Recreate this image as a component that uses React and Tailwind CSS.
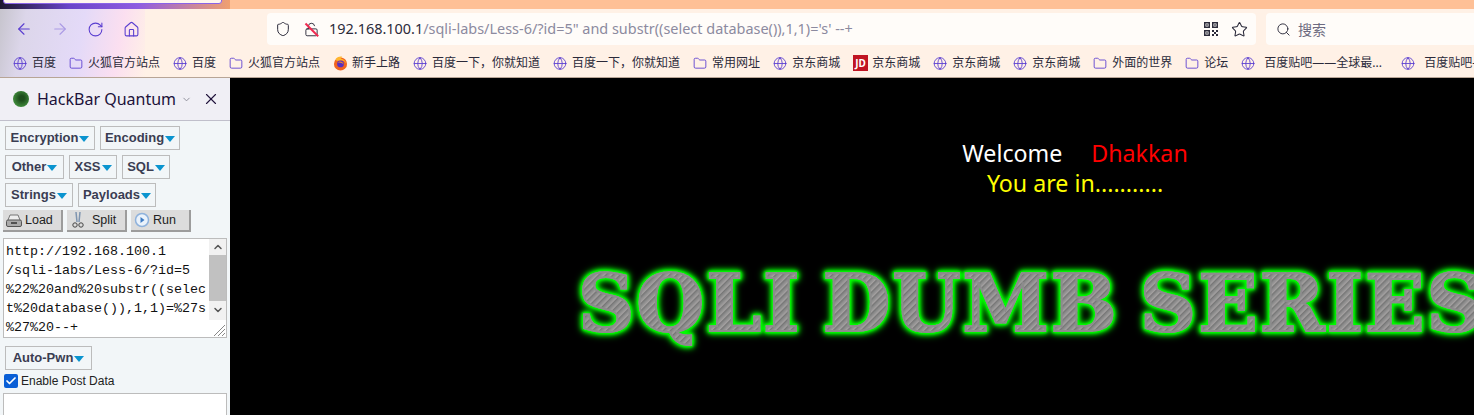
import React from "react";
import { ArrowLeft, ArrowRight, RotateCw, Home, Shield, LockOpen, Star, Search, Globe, Folder, ChevronDown, X, Check } from "lucide-react";

const cjk = "font-['Noto_Sans','Noto_Sans_CJK_SC',sans-serif]";

const bookmarks = [
  ["globe", "百度"],
  ["folder", "火狐官方站点"],
  ["globe", "百度"],
  ["folder", "火狐官方站点"],
  ["firefox", "新手上路"],
  ["globe", "百度一下\uFF0C你就知道"],
  ["globe", "百度一下\uFF0C你就知道"],
  ["folder", "常用网址"],
  ["globe", "京东商城"],
  ["jd", "京东商城"],
  ["globe", "京东商城"],
  ["globe", "京东商城"],
  ["folder", "外面的世界"],
  ["folder", "论坛"],
  ["globe", "百度贴吧——全球最..."],
  ["globe", "百度贴吧—全球最大的中文社区"],
];

const BookmarkIcon = ({ type }) => {
  if (type === "globe") return <Globe size={15} strokeWidth={1.5} className="h-[15px] w-[14px] shrink-0 text-[#5a3ed0]" />;
  if (type === "folder") return <Folder size={15} strokeWidth={1.5} className="h-[15px] w-[14px] shrink-0 text-[#5a3ed0]" />;
  if (type === "jd") {
    return (
      <span className="mr-[-1px] flex h-[16px] w-[15px] shrink-0 items-center justify-center bg-[#c01422] text-[10px] font-bold leading-none text-white">
        JD
      </span>
    );
  }
  return (
    <svg width="15" height="15" viewBox="0 0 16 16" className="mr-[-1px] shrink-0">
      <circle cx="8" cy="8.5" r="7" fill="#f2641f" />
      <path d="M3 3 C5 1 8 0 10 1 C8 2 8 3 9 3 C13 4 15 8 14 11 C15 6 10 4 8 5 C5 5 3 6 3 3 Z" fill="#ffb52e" />
      <circle cx="8" cy="8.5" r="3.6" fill="#5a2fc0" />
      <path d="M5 7 C7 5 11 6 11 9 C10 7 7 7 5 7 Z" fill="#f7941f" />
    </svg>
  );
};

const QrIcon = () => (
  <svg width="16" height="16" viewBox="0 0 16 16" className="text-[#2b2a3a]" fill="currentColor">
    <path fillRule="evenodd" d="M1 1h6v6H1zM2.5 2.5v3h3v-3zM9 1h6v6H9zM10.5 2.5v3h3v-3zM1 9h6v6H1zM2.5 10.5v3h3v-3z" />
    <path d="M3.2 3.2h1.6v1.6H3.2zM11.2 3.2h1.6v1.6h-1.6zM3.2 11.2h1.6v1.6H3.2zM9 9h2v2H9zM13 9h2v2h-2zM11 11h2v2h-2zM9 13h2v2H9zM13 13h2v2h-2z" />
  </svg>
);

const DropButton = ({ label, className }) => (
  <div className={`flex h-[24px] items-center justify-center gap-[1px] border border-[#bcbcbc] text-[13px] font-bold text-[#3a3d52] ${className}`}>
    {label}
    <span className="mt-[1px] h-0 w-0 border-x-[5.5px] border-t-[6px] border-x-transparent border-t-[#0a94cf]" />
  </div>
);

const ToolButton = ({ icon, label }) => (
  <div className="flex h-[22px] w-[60px] items-center gap-[2px] border-r-2 border-b-2 border-[#9c9c9c] bg-[#dcdcdc] pl-[2px] text-[12.5px] text-[#222]">
    {icon}
    {label}
  </div>
);

const urlLines = [
  "http://192.168.100.1",
  "/sqli-1abs/Less-6/?id=5",
  "%22%20and%20substr((selec",
  "t%20database()),1,1)=%27s",
  "%27%20--+",
];

const Sidebar = () => (
  <aside className="flex h-full w-[230px] shrink-0 flex-col overflow-hidden bg-[#f2f6f8] font-['Liberation_Sans',sans-serif]">
    <div className="flex h-[43px] shrink-0 items-center border-b border-[#c0bfcb] bg-[#f0eff5] pl-[13px]">
      <span className="h-[16px] w-[16px] rounded-full bg-[radial-gradient(circle_at_55%_45%,#1d4d1c_20%,#3f8a3b_70%,#5aa552)]" />
      <span className={`ml-[8px] text-[16px] text-[#20123a] ${cjk}`}>HackBar Quantum</span>
      <ChevronDown size={11} className="ml-[5px] text-[#8a8a96]" />
      <X size={18} strokeWidth={1.5} className="ml-[10px] text-[#20123a]" />
    </div>

    <div className="flex flex-col pl-[5px] pt-[5px]">
      <div className="flex gap-[5px]">
        <DropButton label="Encryption" className="w-[90px]" />
        <DropButton label="Encoding" className="w-[80px]" />
      </div>
      <div className="mt-[5px] flex gap-[5px]">
        <DropButton label="Other" className="w-[59px]" />
        <DropButton label="XSS" className="w-[48px]" />
        <DropButton label="SQL" className="w-[48px]" />
      </div>
      <div className="mt-[4px] flex gap-[5px]">
        <DropButton label="Strings" className="w-[68px]" />
        <DropButton label="Payloads" className="w-[78px]" />
      </div>
    </div>

    <div className="ml-[3px] mt-[3px] flex gap-[4px]">
      <ToolButton
        label="Load"
        icon={
          <svg width="18" height="16" viewBox="0 0 18 16" className="shrink-0">
            <path d="M3 8 L5 3 H13 L15 8" fill="#eee" stroke="#777" />
            <rect x="1.5" y="8" width="15" height="6.5" rx="1.5" fill="#aaa" stroke="#555" />
            <path d="M6 11h6" stroke="#333" strokeWidth="1.5" />
          </svg>
        }
      />
      <ToolButton
        label="Split"
        icon={
          <svg width="18" height="18" viewBox="0 0 18 18" className="mr-[3px] shrink-0" fill="none" stroke="#444">
            <path d="M7 1 L8 11 M11 1 L10 11" stroke="#7f95b0" strokeWidth="1.5" />
            <circle cx="6" cy="14" r="2.2" />
            <circle cx="12" cy="14" r="2.2" />
          </svg>
        }
      />
      <ToolButton
        label="Run"
        icon={
          <svg width="16" height="16" viewBox="0 0 16 16" className="mx-[1px] shrink-0">
            <circle cx="8" cy="8" r="6.5" fill="#eaf2fb" stroke="#8fb2dc" strokeWidth="1.5" />
            <path d="M6.5 5 L10.5 8 L6.5 11 Z" fill="#3f7cc4" />
          </svg>
        }
      />
    </div>

    <div className="relative ml-[3px] mt-[6px] flex h-[100px] w-[224px] shrink-0 border border-[#bcbcbc] bg-white">
      <div className="flex-1 pl-[2px] pt-[3px] font-['Liberation_Mono',monospace] text-[13.33px] leading-[19px] text-[#111]">
        {urlLines.map((line) => (
          <div key={line} className="whitespace-pre">{line}</div>
        ))}
      </div>
      <div className="flex h-[81px] w-[17px] shrink-0 flex-col items-center bg-[#f1f1f1]">
        <ChevronDown size={12} strokeWidth={3} className="mt-[2px] h-[12px] rotate-180 text-[#555]" />
        <div className="mt-[2px] h-[46px] w-full bg-[#c1c1c1]" />
        <ChevronDown size={12} strokeWidth={3} className="mt-[3px] text-[#555]" />
      </div>
      <svg width="14" height="14" viewBox="0 0 14 14" className="absolute bottom-0 right-0" stroke="#888">
        <path d="M13 2 L2 13 M13 6 L6 13 M13 10 L10 13" />
      </svg>
    </div>

    <div className="ml-[5px] mt-[8px]">
      <DropButton label="Auto-Pwn" className="w-[87px]" />
    </div>

    <label className="ml-[4px] mt-[3px] flex h-[15px] items-center gap-[3px] text-[12px] text-[#222]">
      <span className="flex h-[14px] w-[14px] items-center justify-center rounded-[2px] bg-[#0a5fd6]">
        <Check size={12} strokeWidth={3.5} className="text-white" />
      </span>
      Enable Post Data
    </label>

    <div className="ml-[3px] mt-[5px] h-[60px] w-[224px] shrink-0 border border-[#bcbcbc] bg-white" />
  </aside>
);

const Page = () => (
  <main className="h-full min-w-0 flex-1 overflow-hidden bg-black">
    <div className="flex w-[1690px] flex-col items-center pt-[58px]">
      <p className="flex h-[34px] items-center text-[23.2px] font-['Noto_Sans',sans-serif] text-white">
        Welcome<span className="ml-[29px] text-[#ff0000]">Dhakkan</span>
      </p>
      <p className="mt-[-1px] h-[34px] text-[23.2px] leading-[28px] font-['Noto_Sans',sans-serif] text-[#ffff00]">You are in...........</p>
      <div className="ml-[348px] mt-[53px] self-start whitespace-nowrap bg-[repeating-linear-gradient(135deg,#8d8d8d_0px,#a3a0a0_2px,#777_3px,#8f8f8f_5px)] bg-clip-text font-['DejaVu_Serif',serif] text-[78px] font-bold leading-[96px] tracking-[2px] text-transparent [word-spacing:-8px] [-webkit-text-stroke:2px_#8c8c8c] [filter:drop-shadow(0_0_1px_#00ff00)_drop-shadow(0_0_1px_#00ff00)_drop-shadow(0_0_2px_#00ff00)_drop-shadow(0_0_3px_#00ff00)]">
        SQLI DUMB SERIES
      </div>
    </div>
  </main>
);

export default function App() {
  return (
    <div className="flex h-[415px] w-[1474px] flex-col overflow-hidden bg-black">
      <header className={`relative h-[78px] shrink-0 overflow-hidden border-b border-[#b8a596] bg-[#fff1e6] ${cjk}`}>
        {/* theme artwork behind the toolbar */}
        <div className="absolute inset-x-0 top-0 h-[9px] bg-[#fec096]" />
        <div className="absolute left-0 top-0 h-[78px] w-[145px] bg-[linear-gradient(100deg,#c5c3cb_0%,#dcd6ea_18%,#e4daf8_55%,#fbdff0_80%,#fff1e6_100%)]" />
        <div className="absolute left-0 top-0 h-[9px] w-[230px] bg-[linear-gradient(90deg,#1d1830_0%,#6a45c8_30%,#8f5ce0_60%,#f0a070_100%)]" />
        <div className="absolute left-[3px] top-[-6px] h-[10px] w-[219px] rounded-[3px] border border-[#8a63e8] bg-[#fff6ee]" />

        <div className="relative flex h-[49px] items-center pt-[9px]">
          <div className="flex w-[267px] items-center pl-[15px] text-[#5a3ed0]">
            <ArrowLeft size={18} strokeWidth={1.5} />
            <ArrowRight size={18} strokeWidth={1.5} className="ml-[18px] opacity-40" />
            <RotateCw size={17} strokeWidth={1.5} className="ml-[18px]" />
            <Home size={17} strokeWidth={1.5} className="ml-[19px]" />
          </div>
          <div className="flex h-[32px] w-[989px] items-center rounded-[4px] bg-[#fffcf9] pl-[8px] pr-[8px] text-[#2b2a3a]">
            <Shield size={16} strokeWidth={1.5} />
            <span className="relative ml-[13px] flex">
              <LockOpen size={15} strokeWidth={1.5} />
              <span className="absolute left-[-1px] top-[7px] h-[1.5px] w-[18px] rotate-45 bg-[#f02a50]" />
            </span>
            <span className="ml-[10px] whitespace-nowrap text-[14.45px]">
              192.168.100.1<span className="text-[#8c8a9f]">/sqli-labs/Less-6/?id=5" and substr((select database()),1,1)='s' --+</span>
            </span>
            <span className="ml-auto flex items-center gap-[12px]">
              <QrIcon />
              <Star size={17} strokeWidth={1.5} />
            </span>
          </div>
          <div className="ml-[10px] flex h-[32px] flex-1 items-center gap-[7px] rounded-l-[4px] bg-[#fffcf9] pl-[10px] text-[14px] text-[#6d6a80]">
            <Search size={15} strokeWidth={1.5} className="text-[#2b2a3a]" />
            搜索
          </div>
        </div>

        <nav className="relative flex h-[28px] items-center gap-[13px] pl-[13px] text-[12px] text-[#2b2a3a]">
          {bookmarks.map(([type, label], i) => (
            <div key={i} className={`flex shrink-0 items-center ${i >= 14 ? "gap-[9px]" : "gap-[5px]"} ${i === 14 ? "w-[147px]" : ""}`}>
              <BookmarkIcon type={type} />
              <span className="whitespace-nowrap">{label}</span>
            </div>
          ))}
        </nav>
      </header>

      <div className="flex min-h-0 flex-1">
        <Sidebar />
        <Page />
      </div>
    </div>
  );
}
